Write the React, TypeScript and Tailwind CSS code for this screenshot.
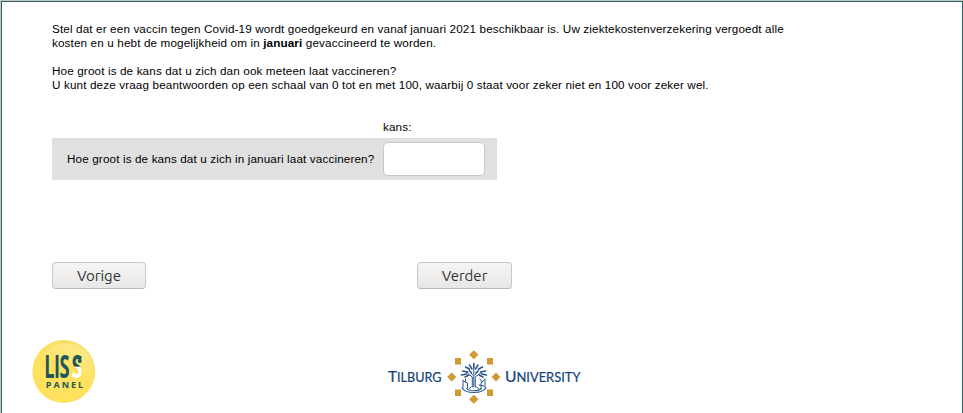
import React from "react";

function NavButton({ label, className }: { label: string; className: string }) {
  return (
    <button
      type="button"
      className={`h-[27px] rounded-[4px] border border-[#cdc7c2] border-b-[#bfb8b1] bg-gradient-to-b from-[#f6f5f4] to-[#e9e7e5] font-['Ubuntu','Noto_Sans',sans-serif] text-[15px] leading-[25px] text-[#2e3436] ${className}`}
    >
      {label}
    </button>
  );
}

function LissLogo() {
  return (
    <svg width="64" height="64" viewBox="0 0 64 64" aria-label="LISS panel">
      <defs>
        <radialGradient id="sun" cx="46%" cy="57%" r="57%">
          <stop offset="0" stopColor="#ffe263" />
          <stop offset="0.8" stopColor="#ffe15c" />
          <stop offset="1" stopColor="#f7de64" />
        </radialGradient>
        <linearGradient id="shine" x1="0.3" y1="1" x2="0.75" y2="0">
          <stop offset="0.35" stopColor="#fff" stopOpacity="0" />
          <stop offset="1" stopColor="#fff" stopOpacity="0.3" />
        </linearGradient>
        <linearGradient id="swoosh" gradientUnits="userSpaceOnUse" x1="0" y1="-23" x2="0" y2="0">
          <stop offset="0.48" stopColor="#20565a" />
          <stop offset="0.54" stopColor="#fff" />
        </linearGradient>
      </defs>
      <circle cx="31.8" cy="31.5" r="31.4" fill="url(#sun)" />
      <path d="M7 19C17 2 42-4 56 14C67 30 60 47 52 50C55 25 30 14 7 19Z" fill="url(#shine)" />
      <g fontFamily="'Open Sans', sans-serif" fontWeight="700" fill="#20565a">
        <text transform="translate(12.2 38) scale(.57 1)" fontSize="32" x="0 17.2 26.8">LIS</text>
        <text transform="translate(39.5 38) scale(.62 1)" fontSize="32" fill="url(#swoosh)">S</text>
        <text x="13.7" y="48" fontSize="9" textLength="37.5">PANEL</text>
      </g>
      <circle cx="47.7" cy="21" r="2" fill="#20565a" />
    </svg>
  );
}

function TilburgLogo() {
  return (
    <svg width="196" height="56" viewBox="386 349 196 56" aria-label="Tilburg University">
      <g fontFamily="Lato, sans-serif" fill="#15427c" stroke="#15427c" strokeWidth="0.2">
        <text x="388" y="381.6" fontSize="15.5" textLength="53.5" lengthAdjust="spacingAndGlyphs">T<tspan fontSize="12.8">ILBURG</tspan></text>
        <text x="505" y="381.6" fontSize="15.5" textLength="75.5" lengthAdjust="spacingAndGlyphs">U<tspan fontSize="12.8">NIVERSITY</tspan></text>
      </g>
      <g fill="#cf9a34">
        <path d="M473.8 350.3L478.5 354.8L473.8 359.3L469.1 354.8Z M473.8 394.8L478.5 399.3L473.8 403.8L469.1 399.3Z M451.7 372.5L456.2 377L451.7 381.5L447.2 377Z M496 372.5L500.5 377L496 381.5L491.5 377Z" />
        <path d="M455 358h6v6.5h-6z M487 358h6v6.5h-6z M455 389.5h6v6.5h-6z M487 389.5h6v6.5h-6z" />
      </g>
      <g fill="none" stroke="#2a5587" strokeWidth="1" strokeLinecap="round">
        <path d="M473.8 366V387 M472.3 387V377L466 372 M475.3 387V377L482 372 M472.5 375L468 368 M475.2 375L480 368 M471 387L468.5 389 M476.5 387L479 389" />
        <path strokeWidth="1.5" d="M473.8 363.5V368 M469.5 365l2.5 4 M478 365l-2.5 4 M465.5 367l4 2 M482.5 367l-4 2 M462.5 371l5 1 M485.5 371l-5 1 M461.5 375l5-1 M486.5 375l-5-1 M465 377l4-2 M483 377l-4-2 M469.5 371l2 2 M478 371l-2 2" />
        <path d="M463 380v8 M463.5 381l4 2v5 M465.5 379v3 M484 380l-3 3v5 M485 379v9 M480 379l2 3 M479 385l5 1" />
        <path strokeWidth="1.1" d="M462 388C465.5 394 482 394 486 388 M466.5 388.5C469 391.5 478.5 391.5 481.5 388.5" />
      </g>
    </svg>
  );
}

export default function App() {
  return (
    <div className="h-[413px] overflow-hidden border-l border-t border-[#c4c4c4] bg-white">
      <main className="h-[412px] border-l border-r border-t border-[#2f6467] pt-[20px] font-['Liberation_Sans',Arial,sans-serif] text-[11.7px] leading-[14px] tracking-[0.133px] text-black">
        <section className="ml-[50px] whitespace-nowrap">
          <p>
            Stel dat er een vaccin tegen Covid-19 wordt goedgekeurd en vanaf januari 2021 beschikbaar is. Uw ziektekostenverzekering vergoedt alle<br />
            kosten en u hebt de mogelijkheid om in <b>januari</b> gevaccineerd te worden.
          </p>
          <p className="mt-[14px]">
            Hoe groot is de kans dat u zich dan ook meteen laat vaccineren?<br />
            U kunt deze vraag beantwoorden op een schaal van 0 tot en met 100, waarbij 0 staat voor zeker niet en 100 voor zeker wel.
          </p>
          <div className="mt-[28px] w-[445px]">
            <div className="h-[18px] pl-[331px]">kans:</div>
            <label className="flex h-[42px] items-center bg-[#e0e0e0] pl-[15px]">
              <span className="w-[316px]">Hoe groot is de kans dat u zich in januari laat vaccineren?</span>
              <input type="text" className="h-[34px] w-[102px] rounded-[5px] border border-[#cdc7c2] bg-white outline-none" />
            </label>
          </div>
          <div className="mt-[82px] flex gap-[271px] tracking-normal">
            <NavButton label="Vorige" className="w-[94px]" />
            <NavButton label="Verder" className="w-[95px]" />
          </div>
        </section>
        <footer className="ml-[30px] mt-[51px] flex items-start gap-[290px] tracking-normal">
          <LissLogo />
          <div className="mt-[9px]"><TilburgLogo /></div>
        </footer>
      </main>
    </div>
  );
}
